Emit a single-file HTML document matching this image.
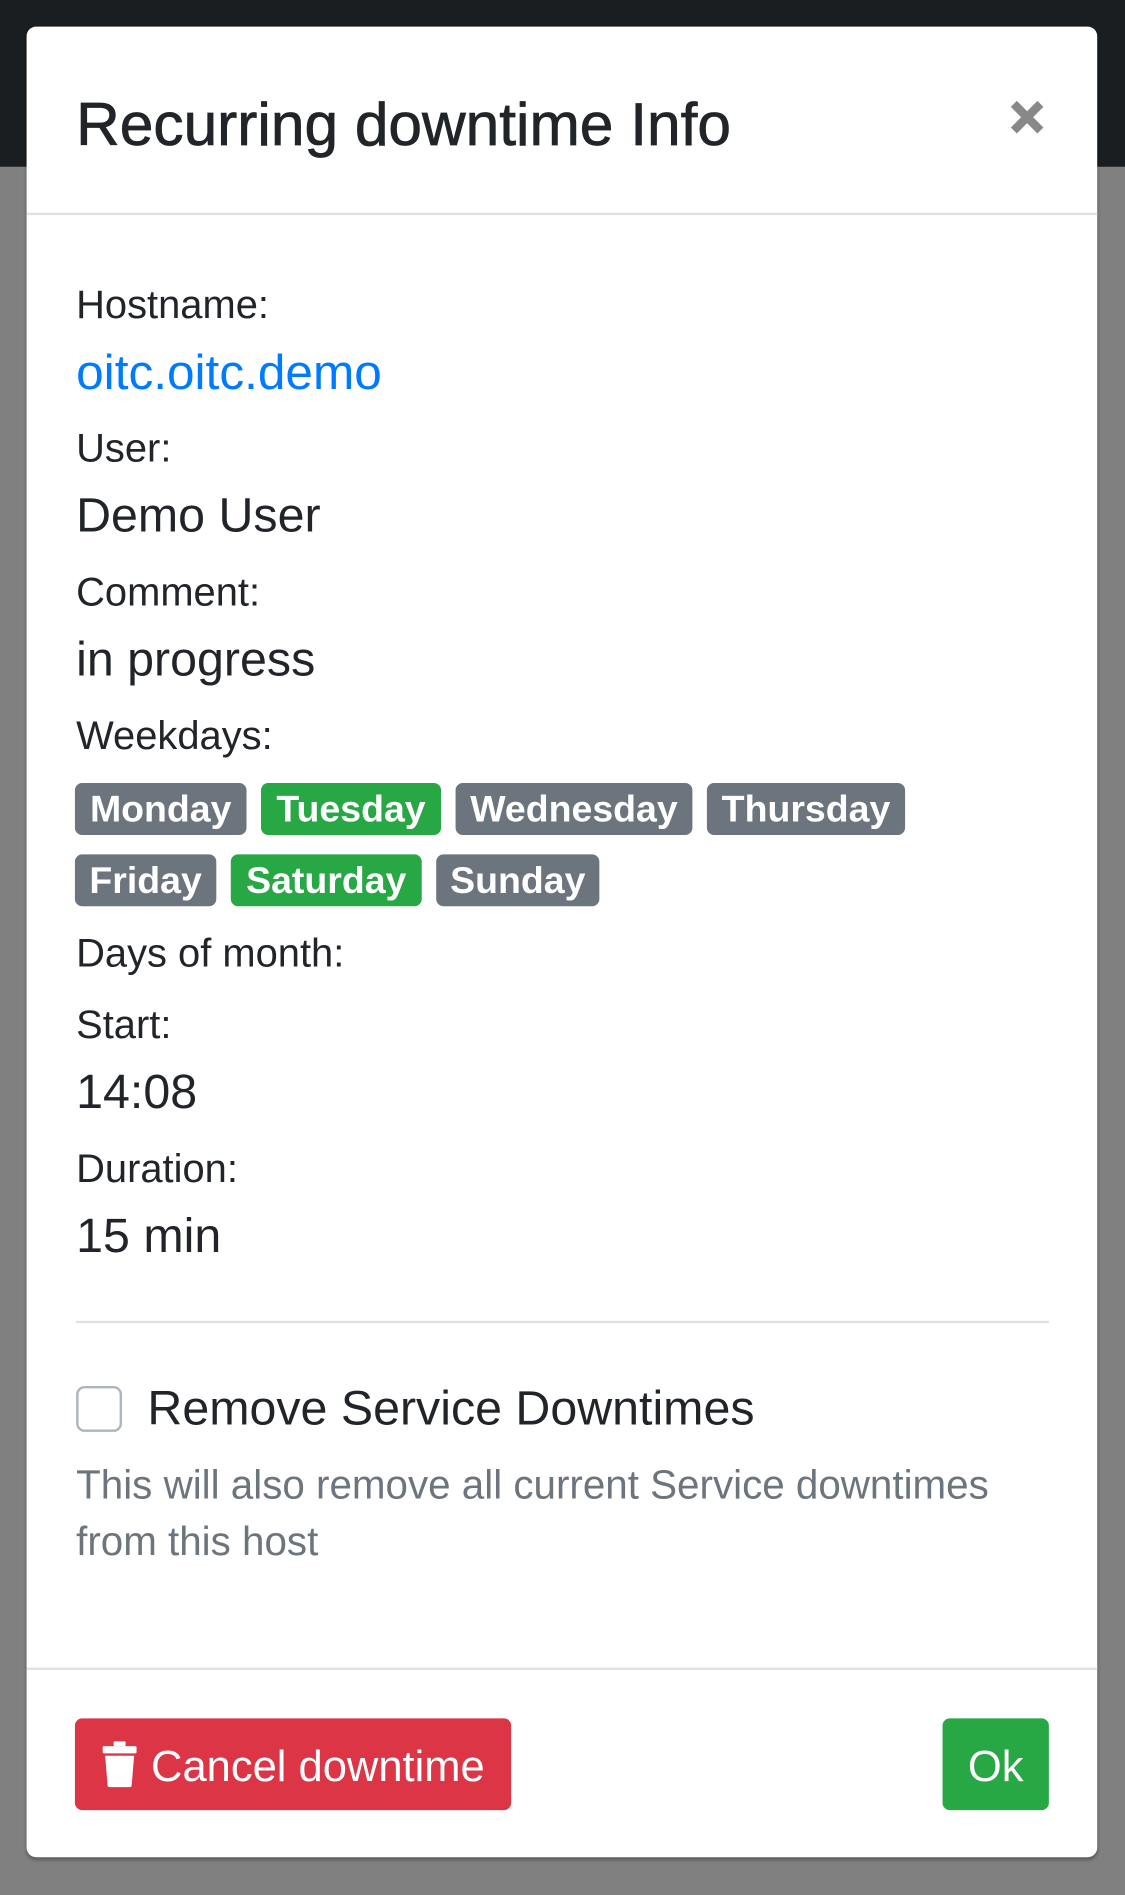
<!DOCTYPE html>
<html><head><meta charset="utf-8"><style>
*{margin:0;padding:0;box-sizing:border-box}
html,body{width:1125px;height:1894px;overflow:hidden;background:#808080}
#s{position:absolute;left:0;top:0;width:931px;height:1568px;transform:scale(1.20838);transform-origin:0 0;font-family:"Liberation Sans",Arial,sans-serif;color:#212529}
.top{position:absolute;left:0;top:0;width:931px;height:138px;background:#1b1e21}
.modal{position:absolute;left:22px;top:22px;width:886px;height:1515px;background:#fff;border-radius:8px;box-shadow:0 2px 3px rgba(0,0,0,.3)}
.a{position:absolute;line-height:1;white-space:nowrap}
.hr{position:absolute;height:2px;background:#dee2e6}
.b{position:absolute;height:43px;border-radius:6px;color:#fff;font-weight:bold;font-size:31px;line-height:43px;text-align:center;background:#6c757d}
.g{background:#28a745}
</style></head><body><div id="s">
<div class="top"></div>
<div class="modal"></div>
<div class="a" style="left:63px;top:78px;font-size:50px;-webkit-text-stroke:0.6px #212529">Recurring downtime Info</div>
<svg style="position:absolute;left:834px;top:81px" width="32" height="32" viewBox="0 0 32 32"><path d="M5 5L27 27M27 5L5 27" stroke="#888" stroke-width="7" stroke-linecap="butt"/></svg>
<div class="hr" style="left:22px;top:176px;width:886px"></div>
<div class="a" style="left:63px;top:235px;font-size:33px">Hostname:</div>
<div class="a" style="left:63px;top:288px;font-size:41px;color:#007bff">oitc.oitc.demo</div>
<div class="a" style="left:63px;top:354px;font-size:33px">User:</div>
<div class="a" style="left:63px;top:407px;font-size:40px">Demo User</div>
<div class="a" style="left:63px;top:473px;font-size:33px">Comment:</div>
<div class="a" style="left:63px;top:526px;font-size:40px">in progress</div>
<div class="a" style="left:63px;top:592px;font-size:33px">Weekdays:</div>
<div class="b" style="left:62px;top:648px;width:142px">Monday</div>
<div class="b g" style="left:216px;top:648px;width:149px">Tuesday</div>
<div class="b" style="left:377px;top:648px;width:196px">Wednesday</div>
<div class="b" style="left:585px;top:648px;width:164px">Thursday</div>
<div class="b" style="left:62px;top:707px;width:117px">Friday</div>
<div class="b g" style="left:191px;top:707px;width:158px">Saturday</div>
<div class="b" style="left:361px;top:707px;width:135px">Sunday</div>
<div class="a" style="left:63px;top:772px;font-size:33px">Days of month:</div>
<div class="a" style="left:63px;top:831px;font-size:33px">Start:</div>
<div class="a" style="left:63px;top:884px;font-size:40px">14:08</div>
<div class="a" style="left:63px;top:950px;font-size:33px">Duration:</div>
<div class="a" style="left:63px;top:1003px;font-size:40px">15 min</div>
<div class="hr" style="left:63px;top:1093px;width:805px"></div>
<div style="position:absolute;left:63px;top:1147px;width:38px;height:38px;border:2px solid #adb5bd;border-radius:7px"></div>
<div class="a" style="left:122px;top:1146px;font-size:40px">Remove Service Downtimes</div>
<div class="a" style="left:63px;top:1213px;font-size:33.4px;color:#6c757d">This will also remove all current Service downtimes</div>
<div class="a" style="left:63px;top:1260px;font-size:33.4px;color:#6c757d">from this host</div>
<div class="hr" style="left:22px;top:1380px;width:886px"></div>
<div style="position:absolute;left:62px;top:1422px;width:361px;height:76px;background:#dc3545;border-radius:6px"></div>
<svg style="position:absolute;left:84px;top:1441px" width="30" height="38" viewBox="0 0 30 38"><rect x="10" y="0" width="10" height="4" rx="1" fill="#fff"/><rect x="1" y="4" width="28" height="6" rx="1" fill="#fff"/><path d="M3 12H27L25 36Q25 38 23 38H7Q5 38 5 36Z" fill="#fff"/></svg>
<div class="a" style="left:125px;top:1444px;font-size:36px;color:#fff">Cancel downtime</div>
<div style="position:absolute;left:780px;top:1422px;width:88px;height:76px;background:#28a745;border-radius:6px"></div>
<div class="a" style="left:780px;top:1444px;width:88px;text-align:center;font-size:36px;color:#fff">Ok</div>
</div></body></html>
